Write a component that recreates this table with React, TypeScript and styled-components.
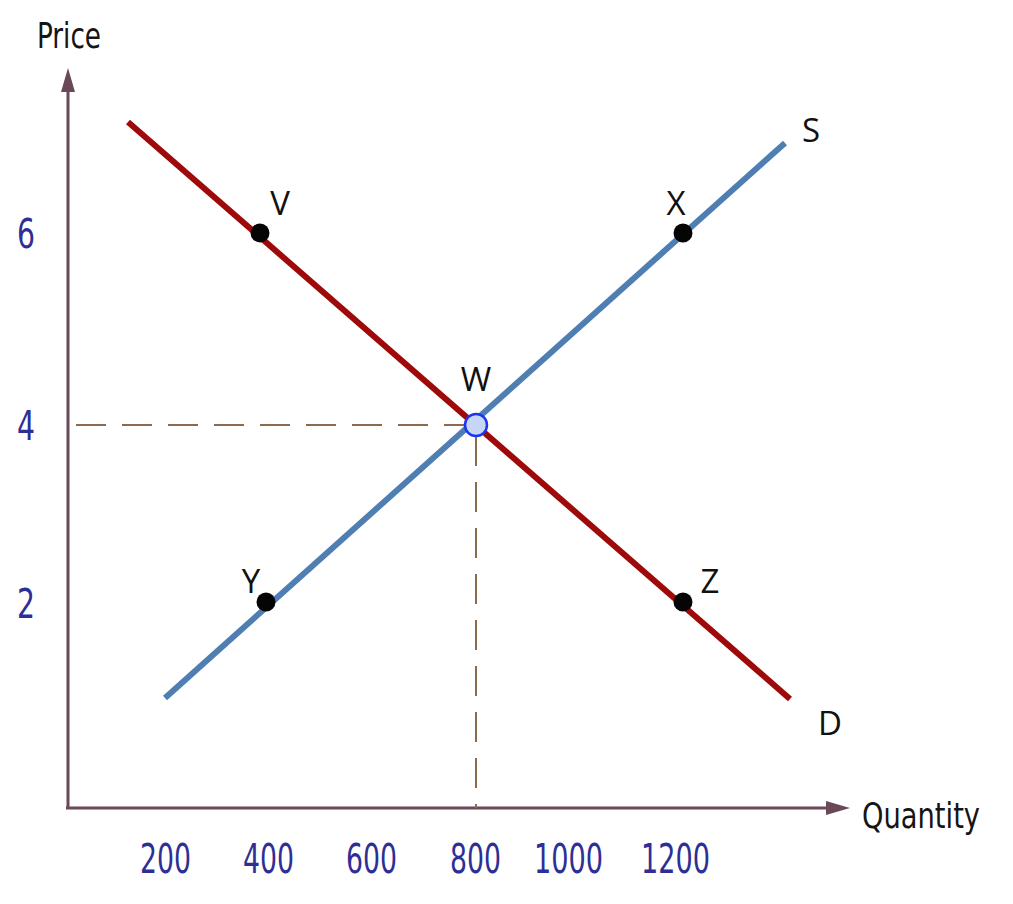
import React from 'react';
import styled, { createGlobalStyle } from 'styled-components';

const GlobalStyle = createGlobalStyle`
    html, body { margin: 0; padding: 0; background: #ffffff; }
    #root { width: 1013px; height: 904px; }
`;

const Page = styled.div`
    width: 1013px;
    height: 904px;
    background: #ffffff;
    overflow: hidden;
`;

const Chart = styled.svg`
    display: block;
    width: 1013px;
    height: 904px;
`;

// condensed face; widths are pinned with textLength below
const narrow = `"DejaVu Sans Condensed", "DejaVu Sans", sans-serif`;

const AxisTitle = styled.text`
    font-family: ${narrow};
    font-size: 36px;
    fill: #151515;
`;

const TickLabel = styled.text`
    font-family: ${narrow};
    font-size: 40px;
    fill: #2e2f96;
`;

const PointLabel = styled.text`
    font-family: "Open Sans", "DejaVu Sans", sans-serif;
    font-size: 33px;
    fill: #111111;
`;

const AXIS = '#6a4858';
const GUIDE = '#8c6b4c';

const X_TICKS = [
    { label: '200', x: 140 },
    { label: '400', x: 243 },
    { label: '600', x: 346 },
    { label: '800', x: 450 },
    { label: '1000', x: 534 },
    { label: '1200', x: 641 },
];

const Y_TICKS = [
    { label: '6', y: 248 },
    { label: '4', y: 440 },
    { label: '2', y: 618 },
];

const DOTS = [
    { x: 260, y: 233 },
    { x: 683, y: 233 },
    { x: 266, y: 602 },
    { x: 683, y: 602 },
];

const LABELS = [
    { text: 'V', x: 280, y: 215 },
    { text: 'X', x: 676, y: 215 },
    { text: 'W', x: 476, y: 391 },
    { text: 'Y', x: 251, y: 593 },
    { text: 'Z', x: 710, y: 593 },
    { text: 'S', x: 811, y: 142 },
    { text: 'D', x: 830, y: 735 },
];

export default function App() {
    return (
        <Page>
            <GlobalStyle />
            <Chart viewBox="0 0 1013 904">
                {/* axes */}
                <line x1={68} y1={808} x2={68} y2={86} stroke={AXIS} strokeWidth={3} />
                <polygon points="68,68 61,92 75,92" fill={AXIS} />
                <line x1={66} y1={808} x2={830} y2={808} stroke={AXIS} strokeWidth={3} />
                <polygon points="850,808 826,801 826,815" fill={AXIS} />

                <AxisTitle x={37} y={48} textLength={64} lengthAdjust="spacingAndGlyphs">Price</AxisTitle>
                <AxisTitle x={862} y={828} textLength={118} lengthAdjust="spacingAndGlyphs">Quantity</AxisTitle>

                {Y_TICKS.map(t => (
                    <TickLabel key={t.label} x={17} y={t.y} textLength={18} lengthAdjust="spacingAndGlyphs">{t.label}</TickLabel>
                ))}
                {X_TICKS.map(t => (
                    <TickLabel
                        key={t.label}
                        x={t.x}
                        y={873}
                        textLength={t.label.length === 4 ? 69 : 51}
                        lengthAdjust="spacingAndGlyphs"
                    >
                        {t.label}
                    </TickLabel>
                ))}

                {/* equilibrium guides */}
                <line x1={76} y1={425} x2={466} y2={425} stroke={GUIDE} strokeWidth={2} strokeDasharray="30 16" />
                <line x1={476} y1={436} x2={476} y2={808} stroke={GUIDE} strokeWidth={2} strokeDasharray="30 16" />

                {/* demand + supply */}
                <line x1={128} y1={122} x2={790} y2={699} stroke="#9e0a0a" strokeWidth={6} />
                <line x1={165} y1={698} x2={785} y2={143} stroke="#4f7fb2" strokeWidth={6} />

                {DOTS.map((d, i) => (
                    <circle key={i} cx={d.x} cy={d.y} r={9.5} fill="#050505" />
                ))}
                <circle cx={476} cy={425} r={11} fill="#c6d6f6" stroke="#1c36f0" strokeWidth={2.5} />

                {LABELS.map(l => (
                    <PointLabel key={l.text} x={l.x} y={l.y} textAnchor="middle">{l.text}</PointLabel>
                ))}
            </Chart>
        </Page>
    );
}
